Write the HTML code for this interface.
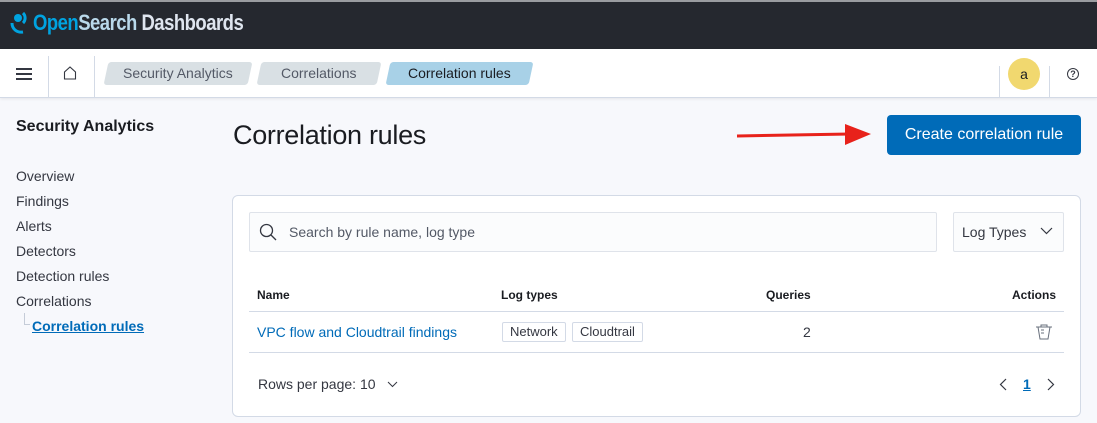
<!DOCTYPE html>
<html><head><style>
*{box-sizing:border-box;margin:0;padding:0}
body{width:1097px;height:423px;overflow:hidden;background:#f7f8fc;font-family:"Liberation Sans",sans-serif;color:#343741;position:relative}
.a{position:absolute}
.hdr{left:0;top:0;width:1097px;height:49px;background:#25282f;border-top:2px solid #9a9ca0}
.bc{left:0;top:49px;width:1097px;height:49px;background:#fff;border-bottom:1px solid #d3dae6;box-shadow:0 1px 3px rgba(0,0,0,.08)}
.crumb{position:absolute;top:13px;height:23px;font-size:14px;line-height:23px;text-align:center;transform:skewX(-12deg);border-radius:3px}
.crumb span{display:inline-block;transform:skewX(12deg)}
.side{font-size:14px;color:#343741}
.panel{left:232px;top:195px;width:849px;height:222px;background:#fff;border:1px solid #d3dae6;border-radius:6px}
.th{font-size:12px;font-weight:bold;color:#1a1c21}
.badge{position:absolute;top:322px;height:20px;border:1px solid #d3dae6;border-radius:2px;font-size:13px;line-height:18px;padding:0 7px;color:#343741}
</style></head><body>
<div class="a hdr"></div>
<svg class="a" style="left:9px;top:11px" width="22" height="24" viewBox="0 0 22 24"><path d="M14 2a7 7 0 0 1 0 10" stroke="#00a3e0" stroke-width="3" fill="none"/><path d="M3 12c0 6 5 10 11 9" stroke="#00a3e0" stroke-width="3" fill="none"/><circle cx="9" cy="7" r="4" fill="#00a3e0"/></svg>
<div class="a" style="left:33px;top:10px;font-size:22px;font-weight:bold;letter-spacing:-0.6px;line-height:26px;transform:scaleX(0.84);transform-origin:0 0;white-space:nowrap"><span style="color:#00a3e0">Open</span><span style="color:#b9d9eb">Search</span><span style="color:#dfe5ef"> Dashboards</span></div>
<div class="a bc"></div>
<div class="a" style="left:16px;top:68px;width:16px;height:2px;background:#343741;box-shadow:0 5px 0 #343741,0 10px 0 #343741"></div>
<div class="a" style="left:48px;top:56px;width:1px;height:42px;background:#d3dae6"></div>
<svg class="a" style="left:63px;top:66px" width="14" height="14" viewBox="0 0 14 14"><path d="M1.5 13V6L7 1l5.5 5v7z" fill="none" stroke="#343741" stroke-width="1.1"/></svg>
<div class="a" style="left:94px;top:56px;width:1px;height:42px;background:#d3dae6"></div>
<div class="crumb" style="left:106px;width:144px;background:#d9e0e4;top:62px"><span style="color:#535966">Security Analytics</span></div>
<div class="crumb" style="left:259px;width:120px;background:#d9e0e4;top:62px"><span style="color:#535966">Correlations</span></div>
<div class="crumb" style="left:388px;width:143px;background:#a8d1e7;top:62px"><span style="color:#1a1c21">Correlation rules</span></div>
<div class="a" style="left:999px;top:66px;width:1px;height:32px;background:#d3dae6"></div>
<div class="a" style="left:1008px;top:58px;width:32px;height:32px;border-radius:50%;background:#f1d86f;text-align:center;line-height:32px;font-size:14px;color:#1a1c21">a</div>
<div class="a" style="left:1049px;top:66px;width:1px;height:32px;background:#d3dae6"></div>
<div class="a" style="left:1067px;top:68px;width:12px;height:12px;border:1px solid #343741;border-radius:50%;font-size:9px;line-height:10px;text-align:center;font-weight:bold">?</div>

<div class="a" style="left:16px;top:118px;font-size:16px;font-weight:bold;color:#1a1c21">Security Analytics</div>
<div class="a side" style="left:16px;top:168px">Overview</div>
<div class="a side" style="left:16px;top:193px">Findings</div>
<div class="a side" style="left:16px;top:218px">Alerts</div>
<div class="a side" style="left:16px;top:243px">Detectors</div>
<div class="a side" style="left:16px;top:268px">Detection rules</div>
<div class="a side" style="left:16px;top:293px">Correlations</div>
<div class="a" style="left:24px;top:313px;width:6px;height:12px;border-left:1px solid #c5ccd8;border-bottom:1px solid #c5ccd8"></div>
<div class="a" style="left:32px;top:318px;font-size:14px;font-weight:bold;color:#006bb8;text-decoration:underline">Correlation rules</div>

<div class="a" style="left:233px;top:120px;font-size:27px;color:#1a1c21;letter-spacing:-0.3px">Correlation rules</div>
<svg class="a" style="left:735px;top:122px" width="140" height="26"><line x1="2" y1="14" x2="115" y2="12" stroke="#e8221b" stroke-width="3"/><path d="M110 2L136 12L110 23z" fill="#e8221b"/></svg>
<div class="a" style="left:887px;top:115px;width:194px;height:40px;background:#006bb8;border-radius:4px;color:#fff;font-size:16px;line-height:40px;text-align:center">Create correlation rule</div>

<div class="a panel"></div>
<div class="a" style="left:249px;top:212px;width:688px;height:40px;background:#fbfcfd;border:1px solid #dfe3ea;border-radius:2px"></div>
<svg class="a" style="left:259px;top:223px" width="18" height="18" viewBox="0 0 18 18"><circle cx="7.5" cy="7.5" r="6" fill="none" stroke="#343741" stroke-width="1.3"/><line x1="12" y1="12" x2="17" y2="17" stroke="#343741" stroke-width="1.3"/></svg>
<div class="a" style="left:289px;top:224px;font-size:14px;color:#535966">Search by rule name, log type</div>
<div class="a" style="left:953px;top:212px;width:111px;height:40px;background:#fbfcfd;border:1px solid #dfe3ea;border-radius:2px"></div>
<div class="a" style="left:962px;top:224px;font-size:14px;color:#343741">Log Types</div>
<svg class="a" style="left:1040px;top:227px" width="13" height="8"><path d="M1 1l5.5 5.5L12 1" fill="none" stroke="#343741" stroke-width="1.2"/></svg>

<div class="a th" style="left:257px;top:288px">Name</div>
<div class="a th" style="left:501px;top:288px">Log types</div>
<div class="a th" style="left:766px;top:288px">Queries</div>
<div class="a th" style="left:1012px;top:288px">Actions</div>
<div class="a" style="left:249px;top:311px;width:815px;height:1px;background:#d3dae6"></div>
<div class="a" style="left:257px;top:324px;font-size:14px;color:#006bb8">VPC flow and Cloudtrail findings</div>
<div class="badge" style="left:502px">Network</div>
<div class="badge" style="left:572px">Cloudtrail</div>
<div class="a" style="left:803px;top:324px;font-size:14px">2</div>
<svg class="a" style="left:1035px;top:323px" width="18" height="18" viewBox="0 0 18 18"><path d="M1 4h16M6 4V2h6v2M3 4l2 12h8l2-12M6 7h3M6 10h3" fill="none" stroke="#69707d" stroke-width="1"/></svg>
<div class="a" style="left:249px;top:352px;width:815px;height:1px;background:#d3dae6"></div>
<div class="a" style="left:258px;top:376px;font-size:14px">Rows per page: 10</div>
<svg class="a" style="left:387px;top:381px" width="11" height="7"><path d="M1 1l4.5 4.5L10 1" fill="none" stroke="#343741" stroke-width="1"/></svg>
<svg class="a" style="left:999px;top:378px" width="8" height="13"><path d="M7 1L1.5 6.5 7 12" fill="none" stroke="#343741" stroke-width="1.2"/></svg>
<div class="a" style="left:1023px;top:376px;font-size:14px;font-weight:bold;color:#006bb8;text-decoration:underline">1</div>
<svg class="a" style="left:1047px;top:378px" width="8" height="13"><path d="M1 1l5.5 5.5L1 12" fill="none" stroke="#343741" stroke-width="1.2"/></svg>
</body></html>
